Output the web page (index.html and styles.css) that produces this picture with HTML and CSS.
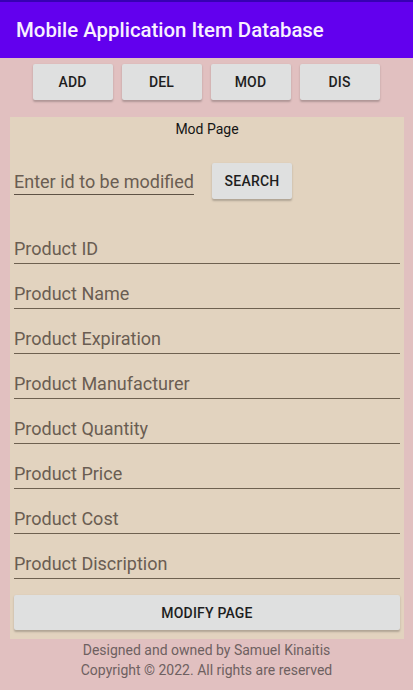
FILE: index.html
```html
<!DOCTYPE html>
<html>
<head>
<meta charset="utf-8">
<link rel="stylesheet" href="styles.css">
</head>
<body>
<div class="status"></div>
<header class="appbar">Mobile Application Item Database</header>
<nav class="tabs">
  <button class="btn tab">ADD</button>
  <button class="btn tab">DEL</button>
  <button class="btn tab">MOD</button>
  <button class="btn tab">DIS</button>
</nav>
<main class="panel">
  <div class="title">Mod Page</div>
  <div class="search-row">
    <div class="search-input">Enter id to be modified</div>
    <button class="btn search">SEARCH</button>
  </div>
  <div class="fields">
    <div class="field">Product ID</div>
    <div class="field">Product Name</div>
    <div class="field">Product Expiration</div>
    <div class="field">Product Manufacturer</div>
    <div class="field">Product Quantity</div>
    <div class="field">Product Price</div>
    <div class="field">Product Cost</div>
    <div class="field">Product Discription</div>
  </div>
  <button class="btn modify">MODIFY PAGE</button>
</main>
<footer class="footer">
  <div>Designed and owned by Samuel Kinaitis</div>
  <div>Copyright © 2022. All rights are reserved</div>
</footer>
</body>
</html>
```
FILE: styles.css
```css
* { box-sizing: border-box; }
html, body { margin: 0; padding: 0; }
body {
  width: 413px;
  height: 690px;
  overflow: hidden;
  background: #e1c0c0;
  font-family: Roboto, "Liberation Sans", sans-serif;
}
.status { height: 2px; background: #3700b3; }
.appbar {
  height: 56px;
  background: #6200ee;
  color: #f8f0ff;
  font-size: 20.4px;
  font-weight: 500;
  padding-left: 16px;
  display: flex;
  align-items: center;
}
.btn {
  border: none;
  background: #dfe0e0;
  color: #1e1e1e;
  font-family: Roboto, "Liberation Sans", sans-serif;
  font-size: 14px;
  font-weight: 500;
  letter-spacing: 0.2px;
  box-shadow: 0 1.5px 2px rgba(0,0,0,0.22);
  border-radius: 2px;
  padding: 0;
}
.tabs {
  display: flex;
  justify-content: center;
  gap: 9px;
  margin-top: 6px;
  padding-right: 1px;
}
.tab { width: 80px; height: 36px; }
.panel {
  margin: 17px 9px 0 10px;
  background: #e2d3bf;
  padding: 2px 4px 9px 4px;
  display: flex;
  flex-direction: column;
}
.title {
  text-align: center;
  font-size: 14px;
  line-height: 20px;
  color: #151515;
}
.search-row {
  display: flex;
  margin-top: 24px;
  height: 36px;
}
.search-input {
  width: 180px;
  align-self: flex-end;
  margin-bottom: 4px;
  font-size: 18px;
  line-height: 20px;
  color: #6a5d52;
  padding-bottom: 2px;
  border-bottom: 1.5px solid #5e5245;
  white-space: nowrap;
}
.search { width: 80px; height: 36px; margin-left: 18px; }
.fields {
  margin-top: 20px;
  display: flex;
  flex-direction: column;
}
.field {
  height: 45px;
  display: flex;
  align-items: flex-end;
  font-size: 18px;
  line-height: 20px;
  color: #6a5d52;
  padding-bottom: 4px;
  border-bottom: 1.5px solid #6e6150;
}
.modify {
  margin-top: 16px;
  height: 35px;
  width: 100%;
}
.footer {
  margin-top: 1px;
  text-align: center;
  font-size: 14px;
  line-height: 20px;
  color: #6e6060;
}
```
